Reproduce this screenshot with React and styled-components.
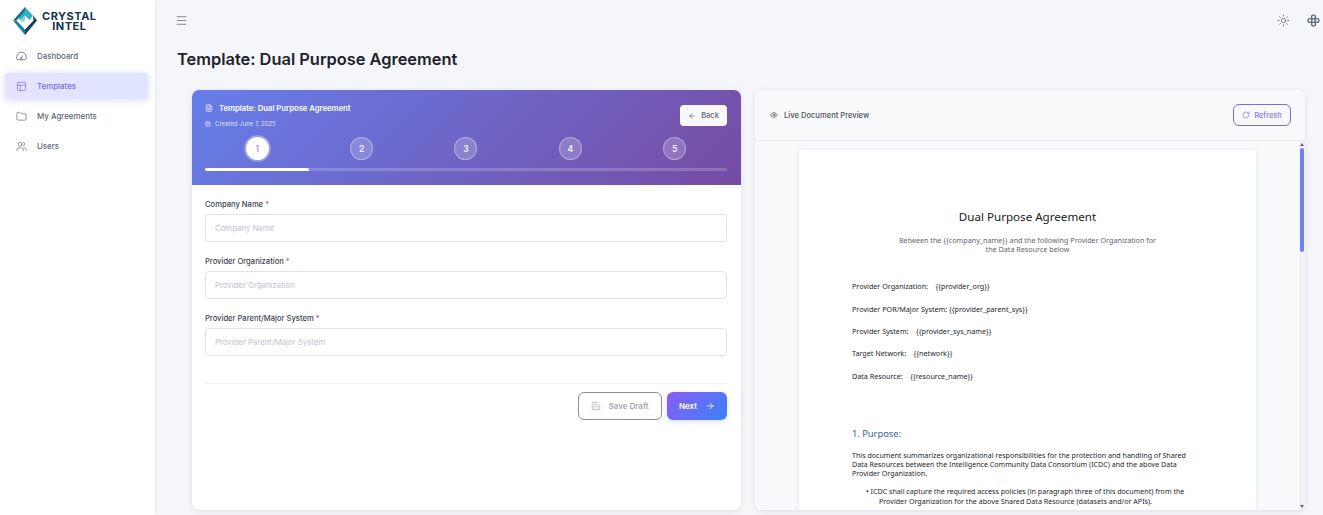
import React from "react";
import styled, { createGlobalStyle } from "styled-components";
import {
  ArrowLeft,
  ArrowRight,
  CalendarDays,
  Eye,
  FileText,
  Folder,
  Menu,
  PanelsTopLeft,
  RotateCw,
  Save,
  Sun,
  Users,
} from "lucide-react";

const GlobalStyle = createGlobalStyle`
  html, body {
    margin: 0;
    height: 100%;
    overflow: hidden;
    background: #f5f6fa;
    font-family: Inter, "Liberation Sans", sans-serif;
  }
  * { box-sizing: border-box; }
`;

const Shell = styled.div`
  display: flex;
  width: 1323px;
  height: 515px;
  overflow: hidden;
`;

const Sidebar = styled.aside`
  flex: 0 0 155px;
  background: #ffffff;
  box-shadow: 0 0 4px rgba(40, 50, 80, 0.08);
  padding: 7px 7px 0 5px;
`;

const Brand = styled.div`
  display: flex;
  align-items: center;
  gap: 5px;
  height: 28px;
  margin: 0 0 8px 8px;
`;

const BrandName = styled.div`
  font-size: 11px;
  line-height: 10.5px;
  font-weight: 700;
  letter-spacing: 0.5px;
  text-align: center;
  color: #16324f;
`;

const NavList = styled.nav`
  display: flex;
  flex-direction: column;
  gap: 4px;
`;

const NavItem = styled.a`
  display: flex;
  align-items: center;
  gap: 10px;
  height: 26px;
  padding-left: 11px;
  border-radius: 3px;
  font-size: 7.9px;
  font-weight: 500;
  color: ${(p) => (p.$active ? "#7c6be6" : "#5f6778")};
  background: ${(p) =>
    p.$active ? "linear-gradient(90deg, #e6e3fd, #dfe6fe)" : "transparent"};
  box-shadow: ${(p) =>
    p.$active ? "0 1px 7px rgba(120, 110, 240, 0.28)" : "none"};
`;

const Main = styled.main`
  flex: 1;
  min-width: 0;
  display: flex;
  flex-direction: column;
`;

const TopBar = styled.header`
  display: flex;
  align-items: center;
  justify-content: space-between;
  height: 40px;
  padding: 0 3px 0 20px;
  color: #5f6672;
`;

const TopIcons = styled.div`
  display: flex;
  align-items: center;
  gap: 17px;
`;

const PageTitle = styled.h1`
  margin: 8px 0 0 22px;
  height: 42px;
  font-size: 16.4px;
  line-height: 22px;
  font-weight: 600;
  color: #20232b;
`;

const Columns = styled.div`
  display: grid;
  grid-template-columns: 549px 550px;
  gap: 14px;
  margin-left: 37px;
`;

const Card = styled.section`
  position: relative;
  height: 420px;
  border-radius: 7px;
  overflow: hidden;
  background: #ffffff;
  box-shadow: 0 1px 5px rgba(40, 50, 90, 0.12);
`;

const WizardHead = styled.div`
  height: 95px;
  padding: 12px 14px 0 13px;
  background: linear-gradient(135deg, #667eea 0%, #764ba2 100%);
  color: #ffffff;
`;

const HeadTop = styled.div`
  display: flex;
  justify-content: space-between;
  align-items: flex-start;
  height: 34px;
`;

const HeadTitle = styled.div`
  display: flex;
  align-items: center;
  gap: 6px;
  height: 12px;
  font-size: 7.7px;
  font-weight: 600;
`;

const HeadDate = styled.div`
  display: flex;
  align-items: center;
  gap: 4px;
  margin-top: 6px;
  font-size: 6px;
  color: rgba(255, 255, 255, 0.82);
`;

const BackButton = styled.button`
  display: flex;
  align-items: center;
  justify-content: center;
  gap: 5px;
  width: 47px;
  height: 21px;
  margin-top: 3px;
  border: 0;
  border-radius: 4px;
  background: #f7f8fa;
  color: #5d6470;
  font: 500 7.5px Inter, sans-serif;
`;

const Steps = styled.div`
  display: grid;
  grid-template-columns: repeat(5, 1fr);
  justify-items: center;
  margin-top: 1px;
`;

const StepDot = styled.div`
  display: flex;
  align-items: center;
  justify-content: center;
  width: 23px;
  height: 23px;
  border-radius: 50%;
  font-size: 8.5px;
  font-weight: ${(p) => (p.$active ? 500 : 700)};
  color: ${(p) => (p.$active ? "#8a8ee2" : "rgba(255, 255, 255, 0.85)")};
  background: ${(p) => (p.$active ? "#ffffff" : "rgba(255, 255, 255, 0.2)")};
  border: 1px solid rgba(255, 255, 255, 0.32);
  box-shadow: ${(p) =>
    p.$active ? "0 0 0 2px rgba(255, 255, 255, 0.3)" : "none"};
`;

const Track = styled.div`
  height: 2.5px;
  margin-top: 8px;
  border-radius: 2px;
  background: rgba(255, 255, 255, 0.2);
`;

const TrackFill = styled.div`
  height: 100%;
  border-radius: 2px;
  background: #ffffff;
`;

const Form = styled.form`
  padding: 14px 14px 0 13px;
`;

const Field = styled.div`
  height: 57px;
`;

const Label = styled.label`
  display: block;
  height: 15px;
  font-size: 7.6px;
  line-height: 11px;
  font-weight: 500;
  color: #3d4452;

  span {
    color: #e5484d;
  }
`;

const Input = styled.input`
  display: block;
  width: 100%;
  height: 28px;
  padding: 0 9px;
  border: 1px solid #dfe2e8;
  border-radius: 4px;
  background: #ffffff;
  font: 400 7.8px Inter, sans-serif;

  &::placeholder {
    color: #bfc4cd;
  }
`;

const Divider = styled.hr`
  height: 1px;
  margin: 13px 0 8px;
  border: 0;
  background: #eff0f3;
`;

const Actions = styled.div`
  display: flex;
  justify-content: flex-end;
  gap: 5px;
`;

const DraftButton = styled.button`
  display: flex;
  align-items: center;
  justify-content: center;
  gap: 7px;
  width: 84px;
  height: 28px;
  border: 1.5px solid #8b909c;
  border-radius: 6px;
  background: #ffffff;
  color: #a3a8b3;
  font: 600 8px Inter, sans-serif;
`;

const NextButton = styled.button`
  display: flex;
  align-items: center;
  justify-content: center;
  gap: 8px;
  width: 60px;
  height: 28px;
  border: 0;
  border-radius: 6px;
  background: linear-gradient(135deg, #8b5cf6, #3b82f6);
  box-shadow: 0 2px 5px rgba(90, 100, 240, 0.22);
  color: #ffffff;
  font: 600 8px Inter, sans-serif;
`;

const PreviewHead = styled.div`
  display: flex;
  align-items: center;
  justify-content: space-between;
  height: 51px;
  padding: 0 14px 0 15px;
  background: #f8f9fb;
  border-bottom: 1px solid #e8eaee;
`;

const PreviewTitle = styled.div`
  display: flex;
  align-items: center;
  gap: 6px;
  font-size: 7.6px;
  font-weight: 500;
  color: #4b5260;
`;

const RefreshButton = styled.button`
  display: flex;
  align-items: center;
  justify-content: center;
  gap: 4px;
  width: 58px;
  height: 22px;
  border: 1.5px solid #8068e0;
  border-radius: 6px;
  background: transparent;
  color: #8f7ce8;
  font: 500 7.5px Inter, sans-serif;
`;

const PreviewBody = styled.div`
  height: 369px;
  padding: 9px 49px 0 44px;
  overflow: hidden;
  background: #f8f9fb;
`;

const Doc = styled.article`
  height: 400px;
  padding: 59px 53px 0;
  border-radius: 4px;
  background: #ffffff;
  box-shadow: 0 1px 5px rgba(40, 50, 90, 0.1);
  font-family: "Noto Sans", "Open Sans", sans-serif;
  font-size: 7.2px;
  line-height: 9.1px;
  color: #24272d;
`;

const DocTitle = styled.h2`
  margin: 0;
  font-size: 11.6px;
  line-height: 15px;
  font-weight: 400;
  text-align: center;
  color: #16181c;
`;

const DocSubtitle = styled.p`
  width: 262px;
  margin: 12px auto 29px;
  line-height: 8.6px;
  text-align: center;
  color: #62666d;
`;

const DocLine = styled.p`
  height: 22.4px;
  margin: 0;
  white-space: pre;
`;

const DocHeading = styled.h3`
  margin: 33px 0 10px;
  font-size: 9.3px;
  line-height: 14px;
  font-weight: 400;
  color: #3a5f9e;
`;

const DocPara = styled.p`
  width: 340px;
  margin: 0 0 9px;
  font-size: 7.1px;
`;

const DocBullet = styled.p`
  width: 338px;
  margin: 0;
  padding-left: 27px;
  text-indent: -13px;
  font-size: 7.13px;
`;

const ScrollRail = styled.div`
  position: absolute;
  top: 51px;
  right: 0;
  bottom: 0;
  display: flex;
  flex-direction: column;
  align-items: center;
  justify-content: space-between;
  width: 6px;
  padding: 2px 0;
  background: #f1f2f4;
`;

const ScrollArrow = styled.div`
  width: 0;
  height: 0;
  border-left: 2px solid transparent;
  border-right: 2px solid transparent;
  border-${(p) => (p.$down ? "top" : "bottom")}: 3px solid #5f6672;
`;

const ScrollThumb = styled.div`
  position: absolute;
  top: 7px;
  left: 1px;
  width: 4px;
  height: 104px;
  border-radius: 2px;
  background: #6d82e6;
`;

const ICON = { size: 11, strokeWidth: 1.5 };

const GaugeIcon = () => (
  <svg width="11" height="11" viewBox="0 0 24 24" fill="none" stroke="currentColor" strokeWidth="1.8">
    <path d="M5 19h14a4 4 0 0 0 3-6.5A10 10 0 0 0 2 12.5 4 4 0 0 0 5 19z" />
    <path d="M11 16l4-6" />
    <circle cx="11" cy="16" r="1.4" />
  </svg>
);

const LogoMark = () => (
  <svg width="24" height="28" viewBox="0 0 24 28">
    <path d="M12 0 L20 8.5 L16.5 13 L12 8.5 L7.5 13 L5.5 11 Z" fill="#2fb3c0" />
    <path d="M12 0 L0 13.5 L3.5 13.5 L12 4 Z" fill="#1a6f94" />
    <path d="M7.5 13 L12 8.5 L12 13 L9.5 15.2 Z" fill="#7fd0d8" />
    <path d="M0 13.5 L12 28 L12 22.5 L3.5 13.5 Z" fill="#1f7ea3" />
    <path d="M24 13.5 L12 28 L12 22.5 L20.5 13.5 L20 8.5 Z" fill="#123f60" />
  </svg>
);

const AppsIcon = () => (
  <svg width="13" height="13" viewBox="0 0 24 24" fill="none" stroke="#5f6b7c" strokeWidth="2.6">
    <rect x="8.5" y="2" width="7" height="7" rx="3" />
    <rect x="8.5" y="15" width="7" height="7" rx="3" />
    <rect x="2" y="8.5" width="7" height="7" rx="3" />
    <rect x="15" y="8.5" width="7" height="7" rx="3" />
  </svg>
);

const fields = ["Company Name", "Provider Organization", "Provider Parent/Major System"];

const docLines = [
  "Provider Organization:    {{provider_org}}",
  "Provider POR/Major System: {{provider_parent_sys}}",
  "Provider System:    {{provider_sys_name}}",
  "Target Network:    {{network}}",
  "Data Resource:    {{resource_name}}",
];

export default function App() {
  return (
    <Shell>
      <GlobalStyle />
      <Sidebar>
        <Brand>
          <LogoMark />
          <BrandName>
            CRYSTAL
            <br />
            INTEL
          </BrandName>
        </Brand>
        <NavList>
          <NavItem><GaugeIcon />Dashboard</NavItem>
          <NavItem $active><PanelsTopLeft {...ICON} />Templates</NavItem>
          <NavItem><Folder {...ICON} />My Agreements</NavItem>
          <NavItem><Users {...ICON} />Users</NavItem>
        </NavList>
      </Sidebar>
      <Main>
        <TopBar>
          <Menu size={13} strokeWidth={1.4} />
          <TopIcons>
            <Sun size={13} strokeWidth={1.5} />
            <AppsIcon />
          </TopIcons>
        </TopBar>
        <PageTitle>Template: Dual Purpose Agreement</PageTitle>
        <Columns>
          <Card>
            <WizardHead>
              <HeadTop>
                <div>
                  <HeadTitle><FileText size={8} />Template: Dual Purpose Agreement</HeadTitle>
                  <HeadDate><CalendarDays size={6} />Created June 7, 2025</HeadDate>
                </div>
                <BackButton><ArrowLeft size={8} />Back</BackButton>
              </HeadTop>
              <Steps>
                {[1, 2, 3, 4, 5].map((n) => (
                  <StepDot key={n} $active={n === 1}>{n}</StepDot>
                ))}
              </Steps>
              <Track>
                <TrackFill style={{ width: "20%" }} />
              </Track>
            </WizardHead>
            <Form>
              {fields.map((name) => (
                <Field key={name}>
                  <Label>{name} <span>*</span></Label>
                  <Input placeholder={name} />
                </Field>
              ))}
              <Divider />
              <Actions>
                <DraftButton type="button"><Save size={10} strokeWidth={1.5} />Save Draft</DraftButton>
                <NextButton type="button">Next<ArrowRight size={10} /></NextButton>
              </Actions>
            </Form>
          </Card>
          <Card>
            <PreviewHead>
              <PreviewTitle><Eye size={8} />Live Document Preview</PreviewTitle>
              <RefreshButton><RotateCw size={8} />Refresh</RefreshButton>
            </PreviewHead>
            <PreviewBody>
              <Doc>
                <DocTitle>Dual Purpose Agreement</DocTitle>
                <DocSubtitle>
                  Between the {"{{company_name}}"} and the following Provider Organization for the Data Resource below
                </DocSubtitle>
                {docLines.map((line) => (
                  <DocLine key={line}>{line}</DocLine>
                ))}
                <DocHeading>1. Purpose:</DocHeading>
                <DocPara>
                  This document summarizes organizational responsibilities for the protection and handling of Shared
                  Data Resources between the Intelligence Community Data Consortium (ICDC) and the above Data
                  Provider Organization.
                </DocPara>
                <DocBullet>
                  • ICDC shall capture the required access policies (in paragraph three of this document) from the
                  Provider Organization for the above Shared Data Resource (datasets and/or APIs).
                </DocBullet>
              </Doc>
            </PreviewBody>
            <ScrollRail>
              <ScrollArrow />
              <ScrollThumb />
              <ScrollArrow $down />
            </ScrollRail>
          </Card>
        </Columns>
      </Main>
    </Shell>
  );
}
